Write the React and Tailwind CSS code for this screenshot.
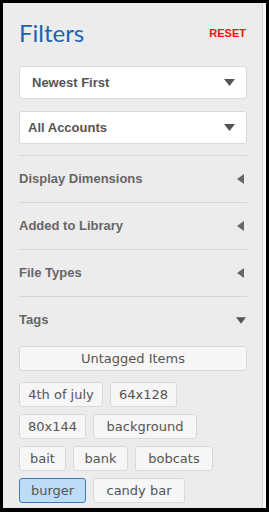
import React from "react";

const font = { fontFamily: "'DejaVu Sans', 'Liberation Sans', sans-serif" };
const boldFont = { fontFamily: "'Liberation Sans', Arial, sans-serif" };

function Down({ className = "" }) {
  return (
    <svg width="11" height="7" viewBox="0 0 11 7" className={className}>
      <polygon points="0,0 11,0 5.5,7" fill="#555" />
    </svg>
  );
}
function Left() {
  return (
    <svg width="7" height="10" viewBox="0 0 7 10">
      <polygon points="7,0 7,10 0,5" fill="#666" />
    </svg>
  );
}

const tags = [
  { t: "4th of july", w: "w-[84px]" },
  { t: "64x128", w: "w-[67px]" },
  { t: "80x144", w: "w-[67px]" },
  { t: "background", w: "w-[104px]" },
  { t: "bait", w: "w-[47px]" },
  { t: "bank", w: "w-[55px]" },
  { t: "bobcats", w: "w-[78px]" },
  { t: "burger", w: "w-[67px]", sel: true },
  { t: "candy bar", w: "w-[92px]" },
];

export default function App() {
  return (
    <div className="w-[269px] h-[512px] bg-black pt-[3px] pl-[3px] pr-[3px] pb-[4px] overflow-hidden" style={font}>
      <div className="flex h-full">
        <div className="flex-1 bg-[#ececec] pl-[16px] pr-[15px] pt-[12px] overflow-hidden">
          <div className="h-[36px] flex items-center justify-between">
            <span className="text-[24px] leading-none text-[#1b63b8]" style={{ fontFamily: "Lato, 'Liberation Sans', sans-serif" }}>Filters</span>
            <span className="text-[11px] font-bold text-[#ee1111] mr-[1px]" style={boldFont}>RESET</span>
          </div>
          <div className="mt-[15px] h-[33px] bg-white border border-[#d9d9d9] rounded-[3px] flex items-center justify-between pl-[12px] pr-[11px]">
            <span className="text-[13px] font-bold text-[#555]" style={boldFont}>Newest First</span>
            <Down />
          </div>
          <div className="mt-[12px] h-[33px] bg-white border border-[#d9d9d9] rounded-[3px] flex items-center justify-between pl-[8px] pr-[11px]">
            <span className="text-[13px] font-bold text-[#555]" style={boldFont}>All Accounts</span>
            <Down />
          </div>
          <div className="mt-[11px] border-t border-[#d4d4d4]">
            {["Display Dimensions", "Added to Library", "File Types"].map((s) => (
              <div key={s} className="h-[47px] flex items-center justify-between border-b border-[#d4d4d4] pr-[3px]">
                <span className="text-[13px] font-bold text-[#666]" style={boldFont}>{s}</span>
                <Left />
              </div>
            ))}
            <div className="h-[46px] flex items-center justify-between pr-[1px]">
              <span className="text-[13px] font-bold text-[#666]" style={boldFont}>Tags</span>
              <Down className="w-[10px]" />
            </div>
          </div>
          <div className="mt-[3px] h-[25px] bg-[#f6f6f6] border border-[#d9d9d9] rounded-[3px] flex items-center justify-center text-[13px] text-[#555]">
            Untagged Items
          </div>
          <div className="mt-[11px] flex flex-wrap gap-x-[7px] gap-y-[7px]">
            {tags.map(({ t, w, sel }) => (
              <div
                key={t}
                className={
                  sel
                    ? `${w} h-[25px] flex items-center justify-center rounded-[3px] border border-[#3b7ac0] bg-[#bcdcf8] text-[13px] text-[#555]`
                    : `${w} h-[25px] flex items-center justify-center rounded-[3px] border border-[#d9d9d9] bg-[#f6f6f6] text-[13px] text-[#555]`
                }
              >
                {t}
              </div>
            ))}
          </div>
        </div>
        <div className="w-[4px] bg-[#f7f7f7] border-l border-[#d8d8d8]" />
      </div>
    </div>
  );
}
